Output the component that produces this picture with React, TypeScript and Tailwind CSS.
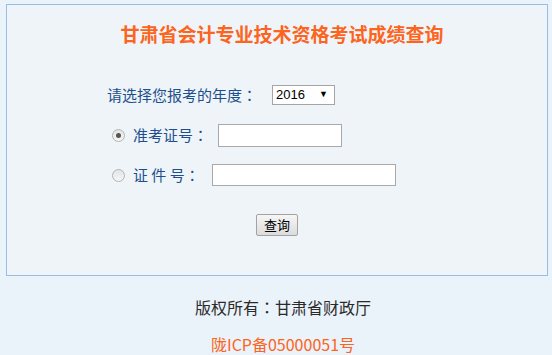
import React from "react";

const cjk = { fontFamily: '"Noto Sans CJK SC", "Noto Sans", sans-serif' };
const colonFont = { fontFamily: '"Noto Sans CJK TC", "Noto Sans CJK SC", sans-serif' };

function Colon() {
  return <span style={colonFont}>：</span>;
}

function Radio({ checked = false }: { checked?: boolean }) {
  return (
    <span className="flex h-[13px] w-[13px] items-center justify-center rounded-full border border-[#b4b4b4] bg-gradient-to-b from-[#e4e4e4] to-[#f6f6f6]">
      {checked && <span className="h-[5px] w-[5px] rounded-full bg-[#555]" />}
    </span>
  );
}

export default function App() {
  return (
    <div className="min-h-[355px] w-[552px] bg-[#eaf2fa] pt-[4px] pl-[6px]" style={cjk}>
      <div className="h-[272px] w-[542px] border border-[#95bfe6] bg-[#eef4f8]">
        <h1 className="mt-[17px] pl-[10px] text-center text-[19px] leading-[24px] font-bold text-[#fc6420]">
          甘肃省会计专业技术资格考试成绩查询
        </h1>

        <div className="mt-[39px] flex h-[20px] items-center pl-[100px] text-[15px] text-[#1d4f8e]">
          <span>
            请选择您报考的年度<Colon />
          </span>
          <div
            className="ml-[15px] flex h-[20px] w-[63px] items-center justify-between border border-[#a5a5a5] bg-white pr-[6px] pl-[3px] text-[13px] text-black"
            style={{ fontFamily: '"Liberation Sans", Arial, sans-serif' }}
          >
            <span>2016</span>
            <span className="text-[9px]">▼</span>
          </div>
        </div>

        <div className="mt-[19px] flex h-[23px] items-center pl-[105px] text-[15px] text-[#1d4f8e]">
          <Radio checked />
          <span className="ml-[8px]">
            准考证号<Colon />
          </span>
          <div className="ml-[10px] h-[23px] w-[124px] border border-[#a9a9a9] bg-white" />
        </div>

        <div className="mt-[17px] flex h-[22px] items-center pl-[105px] text-[15px] text-[#1d4f8e]">
          <Radio />
          <span className="ml-[8px] whitespace-pre">
            证 件 号<Colon />
          </span>
          <div className="ml-[12px] h-[22px] w-[184px] border border-[#a9a9a9] bg-white" />
        </div>

        <div className="mt-[28px] flex justify-center">
          <button className="flex h-[22px] w-[42px] items-center justify-center rounded-[2px] border border-[#a3a3a3] bg-gradient-to-b from-[#f6f6f6] to-[#dcdcdc] text-[13px] text-black">
            查询
          </button>
        </div>
      </div>

      <div className="pl-[8px] text-center">
        <p className="mt-[20px] text-[16px] leading-[22px] text-[#2a2a2a]">
          版权所有<Colon />甘肃省财政厅
        </p>
        <p className="mt-[15px] text-[16px] leading-[22px] text-[#fc6420]">陇ICP备05000051号</p>
      </div>
    </div>
  );
}
